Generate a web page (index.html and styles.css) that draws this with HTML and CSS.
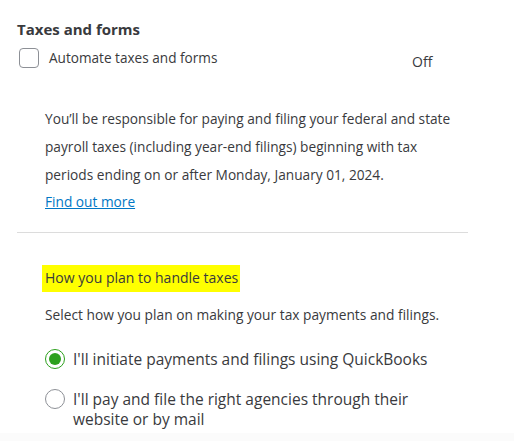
FILE: index.html
```html
<!DOCTYPE html>
<html lang="en">
<head>
<meta charset="utf-8">
<title>Taxes and forms</title>
<link rel="stylesheet" href="styles.css">
</head>
<body>
<div class="page">
  <h2 class="title">Taxes and forms</h2>
  <div class="auto-row">
    <label class="check-label"><span class="checkbox"></span><span>Automate taxes and forms</span></label>
    <span class="status">Off</span>
  </div>
  <p class="info">You’ll be responsible for paying and filing your federal and state payroll taxes (including year-end filings) beginning with tax periods ending on or after Monday, January 01, 2024.</p>
  <a class="link" href="#">Find out more</a>
  <hr class="divider">
  <div class="plan">
    <div class="plan-title"><span class="highlight">How you plan to handle taxes</span></div>
    <p class="plan-desc">Select how you plan on making your tax payments and filings.</p>
    <div class="options">
      <label class="option"><span class="radio checked"></span><span class="option-text">I'll initiate payments and filings using QuickBooks</span></label>
      <label class="option"><span class="radio"></span><span class="option-text">I'll pay and file the right agencies through their website or by mail</span></label>
    </div>
  </div>
</div>
</body>
</html>
```
FILE: styles.css
```css
* { box-sizing: border-box; }
html, body { margin: 0; padding: 0; background: #fff; }
body {
  font-family: "Open Sans", "Liberation Sans", sans-serif;
  color: #393a3d;
  font-size: 14px;
}
.page {
  width: 514px;
  height: 441px;
  padding: 19px 46px 0 17px;
  overflow: hidden;
  background: linear-gradient(to bottom, #fff 433px, #fbfbfb 433px);
}
.title {
  margin: 0;
  font-size: 15px;
  line-height: 20px;
  font-weight: 700;
  color: #393a3d;
}
.auto-row {
  display: flex;
  align-items: flex-start;
  margin-top: 9px;
}
.check-label {
  display: flex;
  align-items: center;
  gap: 10px;
  flex: 1;
  padding-left: 2px;
  line-height: 20px;
  font-size: 13.6px;
}
.checkbox {
  width: 20px;
  height: 20px;
  border: 1px solid #8d9096;
  border-radius: 4px;
  flex: none;
}
.status {
  margin-top: 6px;
  width: 56px;
  line-height: 16px;
}
.info {
  margin: 35px 0 0 28px;
  line-height: 28px;
  font-size: 13.7px;
}
.link {
  display: block;
  margin: 1px 0 0 28px;
  line-height: 24px;
  font-size: 13.7px;
  color: #0077c5;
  text-decoration: underline;
  width: max-content;
}
.divider {
  margin: 18px 0 0 0;
  border: 0;
  border-top: 1px solid #dcdcdc;
  width: 451px;
}
.plan { padding-left: 28px; }
.plan-title {
  margin-top: 35px;
  line-height: 20px;
}
.highlight {
  background: #ffff00;
  padding: 3px 2px 5px 3px;
  margin-left: -3px;
}
.plan-desc {
  margin: 17px 0 0 0;
  line-height: 20px;
  font-size: 13.75px;
}
.options {
  display: flex;
  flex-direction: column;
  gap: 20px;
  margin-top: 24px;
}
.option {
  display: flex;
  align-items: flex-start;
  gap: 8px;
  line-height: 20px;
  font-size: 15.5px;
}
.option-text { max-width: 360px; }
.radio {
  width: 20px;
  height: 20px;
  border: 1px solid #8d9096;
  border-radius: 50%;
  flex: none;
  position: relative;
}
.radio.checked {
  border: 1.5px solid #2ca01c;
}
.radio.checked::after {
  content: "";
  position: absolute;
  left: 2.5px;
  top: 2.5px;
  width: 12px;
  height: 12px;
  border-radius: 50%;
  background: #2ca01c;
}
```
